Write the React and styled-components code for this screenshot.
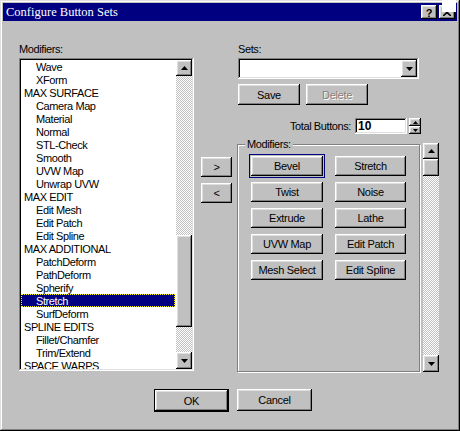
import React from 'react'
import styled, { createGlobalStyle } from 'styled-components'

const GlobalStyle = createGlobalStyle`
  html, body { margin: 0; padding: 0; background: #c0c0c0; }
  body {
    font-family: "Liberation Sans", Arial, sans-serif;
    font-size: 11px;
    color: #000;
  }
  * { box-sizing: border-box; }
`

const raised = `
  background: #c0c0c0;
  box-shadow: inset -1px -1px #000, inset 1px 1px #fff, inset -2px -2px #808080, inset 2px 2px #dfdfdf;
`
const sunken = `
  background: #fff;
  box-shadow: inset -1px -1px #fff, inset 1px 1px #808080, inset -2px -2px #dfdfdf, inset 2px 2px #000;
`
const checker = `
  background: repeating-conic-gradient(#fff 0 25%, #c0c0c0 0 50%) 0 0 / 2px 2px;
`

const Window = styled.div`
  position: relative;
  width: 460px;
  height: 431px;
  padding: 3px;
  display: flex;
  flex-direction: column;
  background: #c0c0c0;
  box-shadow: inset -1px -1px #000, inset 1px 1px #dfdfdf, inset -2px -2px #808080, inset 2px 2px #fff;
`

const TitleBar = styled.div`
  height: 18px;
  background: #000080;
  color: #fff;
  display: flex;
  align-items: center;
  padding: 0 2px 0 3px;
  font-family: "Liberation Serif", "Times New Roman", serif;
  font-size: 12.5px;
`

const TitleText = styled.span`
  flex: 1;
`

const TitleButton = styled.div`
  ${raised}
  width: 16px;
  height: 14px;
  margin-left: 2px;
  display: flex;
  align-items: center;
  justify-content: center;
  color: #000;
  font-family: "Liberation Sans", Arial, sans-serif;
  font-weight: bold;
  font-size: 11px;
  padding-top: 1px;
`

const Glare = styled.div`
  position: absolute;
  top: 0;
  right: 4px;
  width: 14px;
  height: 12px;
  background: #fff;
`

const Body = styled.div`
  flex: 1;
  display: flex;
  flex-direction: column;
  padding: 22px 0 0 16px;
`

const MainRow = styled.div`
  display: flex;
  align-items: flex-start;
`

const Column = styled.div`
  display: flex;
  flex-direction: column;
  width: ${p => p.$width}px;
  margin-left: ${p => p.$ml || 0}px;
  padding-top: ${p => p.$pt || 0}px;
  gap: ${p => p.$gap || 0}px;
`

const Label = styled.div`
  height: 13px;
  line-height: 13px;
  margin: 0 0 2px ${p => p.$ml || 0}px;
  letter-spacing: -0.4px;
  white-space: nowrap;
`

const ListBox = styled.div`
  ${sunken}
  height: 313px;
  padding: 2px;
  display: flex;
`

const ListItems = styled.div`
  flex: 1;
  overflow: hidden;
`

const Item = styled.div`
  height: 13px;
  line-height: 12px;
  margin-right: 1px;
  padding-left: ${p => (p.$header ? 2 : 14)}px;
  letter-spacing: -0.4px;
  white-space: nowrap;
  border: 1px solid transparent;
  background: ${p => (p.$selected ? '#000080' : 'transparent')};
  color: ${p => (p.$selected ? '#fff' : '#000')};
  border-color: ${p => (p.$selected ? '#ffff00' : 'transparent')};
  border-style: ${p => (p.$selected ? 'dotted' : 'solid')};
`

const ScrollBar = styled.div`
  width: 16px;
  height: ${p => p.$height}px;
  display: flex;
  flex-direction: column;
`

const ScrollButton = styled.div`
  ${raised}
  width: 16px;
  height: ${p => p.$h || 16}px;
  flex-shrink: 0;
  display: flex;
  align-items: center;
  justify-content: center;
`

const Track = styled.div`
  ${checker}
  flex: ${p => (p.$fill ? 1 : 'none')};
  height: ${p => (p.$fill ? 'auto' : `${p.$h}px`)};
`

const Button = styled.div`
  ${raised}
  width: ${p => p.$w}px;
  height: ${p => p.$h || 20}px;
  display: flex;
  align-items: center;
  justify-content: center;
  letter-spacing: -0.3px;
  white-space: nowrap;
  color: ${p => (p.$disabled ? '#808080' : '#000')};
  text-shadow: ${p => (p.$disabled ? '1px 1px #fff' : 'none')};
  outline: ${p => (p.$focused ? '1px solid #000080' : 'none')};
  outline-offset: 1px;
`

const DefaultButton = styled(Button)`
  border: 1px solid #000;
`

const Combo = styled.div`
  ${sunken}
  width: 181px;
  height: 21px;
  margin-left: 1px;
  padding: 2px;
  display: flex;
  justify-content: flex-end;
`

const ButtonRow = styled.div`
  display: flex;
  gap: 6px;
  margin: 5px 0 0 1px;
`

const TotalRow = styled.div`
  display: flex;
  align-items: center;
  justify-content: flex-end;
  height: 16px;
  margin-top: 13px;
  padding-right: 18px;
`

const TotalLabel = styled.span`
  margin-right: 4px;
  letter-spacing: -0.4px;
`

const SpinInput = styled.div`
  ${sunken}
  width: 52px;
  height: 16px;
  padding: 0 0 0 3px;
  font-weight: bold;
  font-size: 12px;
  line-height: 16px;
`

const Spinner = styled.div`
  margin-left: 2px;
  display: flex;
  flex-direction: column;
`

const SpinHalf = styled.div`
  ${raised}
  width: 12px;
  height: 8px;
  display: flex;
  align-items: center;
  justify-content: center;
`

const GroupRow = styled.div`
  display: flex;
  gap: 3px;
  margin-top: 9px;
`

const GroupBox = styled.div`
  position: relative;
  width: 183px;
  height: 228px;
  margin-top: 1px;
  border: 1px solid #808080;
  box-shadow: inset 1px 1px #fff, 1px 1px #fff;
  padding: 11px 0 0 13px;
`

const Legend = styled.span`
  position: absolute;
  top: -7px;
  left: 7px;
  padding: 0 2px;
  background: #c0c0c0;
  line-height: 13px;
  letter-spacing: -0.4px;
`

const ButtonGrid = styled.div`
  display: grid;
  grid-template-columns: 72px 71px;
  grid-auto-rows: 20px;
  column-gap: 12px;
  row-gap: 6px;
`

const BottomBar = styled.div`
  display: flex;
  gap: 8px;
  margin-top: 17px;
  padding-left: 135px;
`

const Arrow = ({ dir = 'down', w = 7, h = 4 }) => (
  <svg width={w} height={h} viewBox={`0 0 ${w} ${h}`}>
    {dir === 'up' ? (
      <polygon points={`0,${h} ${w},${h} ${w / 2},0`} fill="#000" />
    ) : (
      <polygon points={`0,0 ${w},0 ${w / 2},${h}`} fill="#000" />
    )}
  </svg>
)

const CloseGlyph = () => (
  <svg width="8" height="7" viewBox="0 0 8 7">
    <path d="M0 0 L8 7 M8 0 L0 7" stroke="#000" strokeWidth="1.6" />
  </svg>
)

const modifiers = [
  ['Wave'], ['XForm'], ['MAX SURFACE', true], ['Camera Map'], ['Material'],
  ['Normal'], ['STL-Check'], ['Smooth'], ['UVW Map'], ['Unwrap UVW'],
  ['MAX EDIT', true], ['Edit Mesh'], ['Edit Patch'], ['Edit Spline'],
  ['MAX ADDITIONAL', true], ['PatchDeform'], ['PathDeform'], ['Spherify'],
  ['Stretch'], ['SurfDeform'], ['SPLINE EDITS', true], ['Fillet/Chamfer'],
  ['Trim/Extend'], ['SPACE WARPS', true],
]

const setButtons = [
  'Bevel', 'Stretch', 'Twist', 'Noise', 'Extrude', 'Lathe',
  'UVW Map', 'Edit Patch', 'Mesh Select', 'Edit Spline',
]

export default function App() {
  return (
    <>
      <GlobalStyle />
      <Window>
        <TitleBar>
          <TitleText>Configure Button Sets</TitleText>
          <TitleButton>?</TitleButton>
          <TitleButton><CloseGlyph /></TitleButton>
        </TitleBar>
        <Glare />
        <Body>
          <MainRow>
            <Column $width={175}>
              <Label>Modifiers:</Label>
              <ListBox>
                <ListItems>
                  {modifiers.map(([name, header]) => (
                    <Item key={name} $header={header} $selected={name === 'Stretch'}>
                      {name}
                    </Item>
                  ))}
                </ListItems>
                <ScrollBar $height={309}>
                  <ScrollButton><Arrow dir="up" /></ScrollButton>
                  <Track $h={159} />
                  <ScrollButton $h={92} />
                  <Track $fill />
                  <ScrollButton $h={17}><Arrow /></ScrollButton>
                </ScrollBar>
              </ListBox>
            </Column>

            <Column $width={31} $ml={7} $pt={114} $gap={6}>
              <Button $w={31}>&gt;</Button>
              <Button $w={31}>&lt;</Button>
            </Column>

            <Column $width={202} $ml={5}>
              <Label $ml={1}>Sets:</Label>
              <Combo>
                <ScrollButton $h={17}><Arrow /></ScrollButton>
              </Combo>
              <ButtonRow>
                <Button $w={62} $h={21}>Save</Button>
                <Button $w={62} $h={21} $disabled>Delete</Button>
              </ButtonRow>
              <TotalRow>
                <TotalLabel>Total Buttons:</TotalLabel>
                <SpinInput>10</SpinInput>
                <Spinner>
                  <SpinHalf><Arrow dir="up" w={5} h={3} /></SpinHalf>
                  <SpinHalf><Arrow w={5} h={3} /></SpinHalf>
                </Spinner>
              </TotalRow>
              <GroupRow>
                <GroupBox>
                  <Legend>Modifiers:</Legend>
                  <ButtonGrid>
                    {setButtons.map((b, i) => (
                      <Button key={b + i} $w={i % 2 ? 71 : 72} $focused={i === 0}>{b}</Button>
                    ))}
                  </ButtonGrid>
                </GroupBox>
                <ScrollBar $height={229}>
                  <ScrollButton><Arrow dir="up" /></ScrollButton>
                  <ScrollButton $h={17} />
                  <Track $fill />
                  <ScrollButton $h={17}><Arrow /></ScrollButton>
                </ScrollBar>
              </GroupRow>
            </Column>
          </MainRow>

          <BottomBar>
            <DefaultButton $w={75} $h={23}>OK</DefaultButton>
            <Button $w={75} $h={22}>Cancel</Button>
          </BottomBar>
        </Body>
      </Window>
    </>
  )
}
